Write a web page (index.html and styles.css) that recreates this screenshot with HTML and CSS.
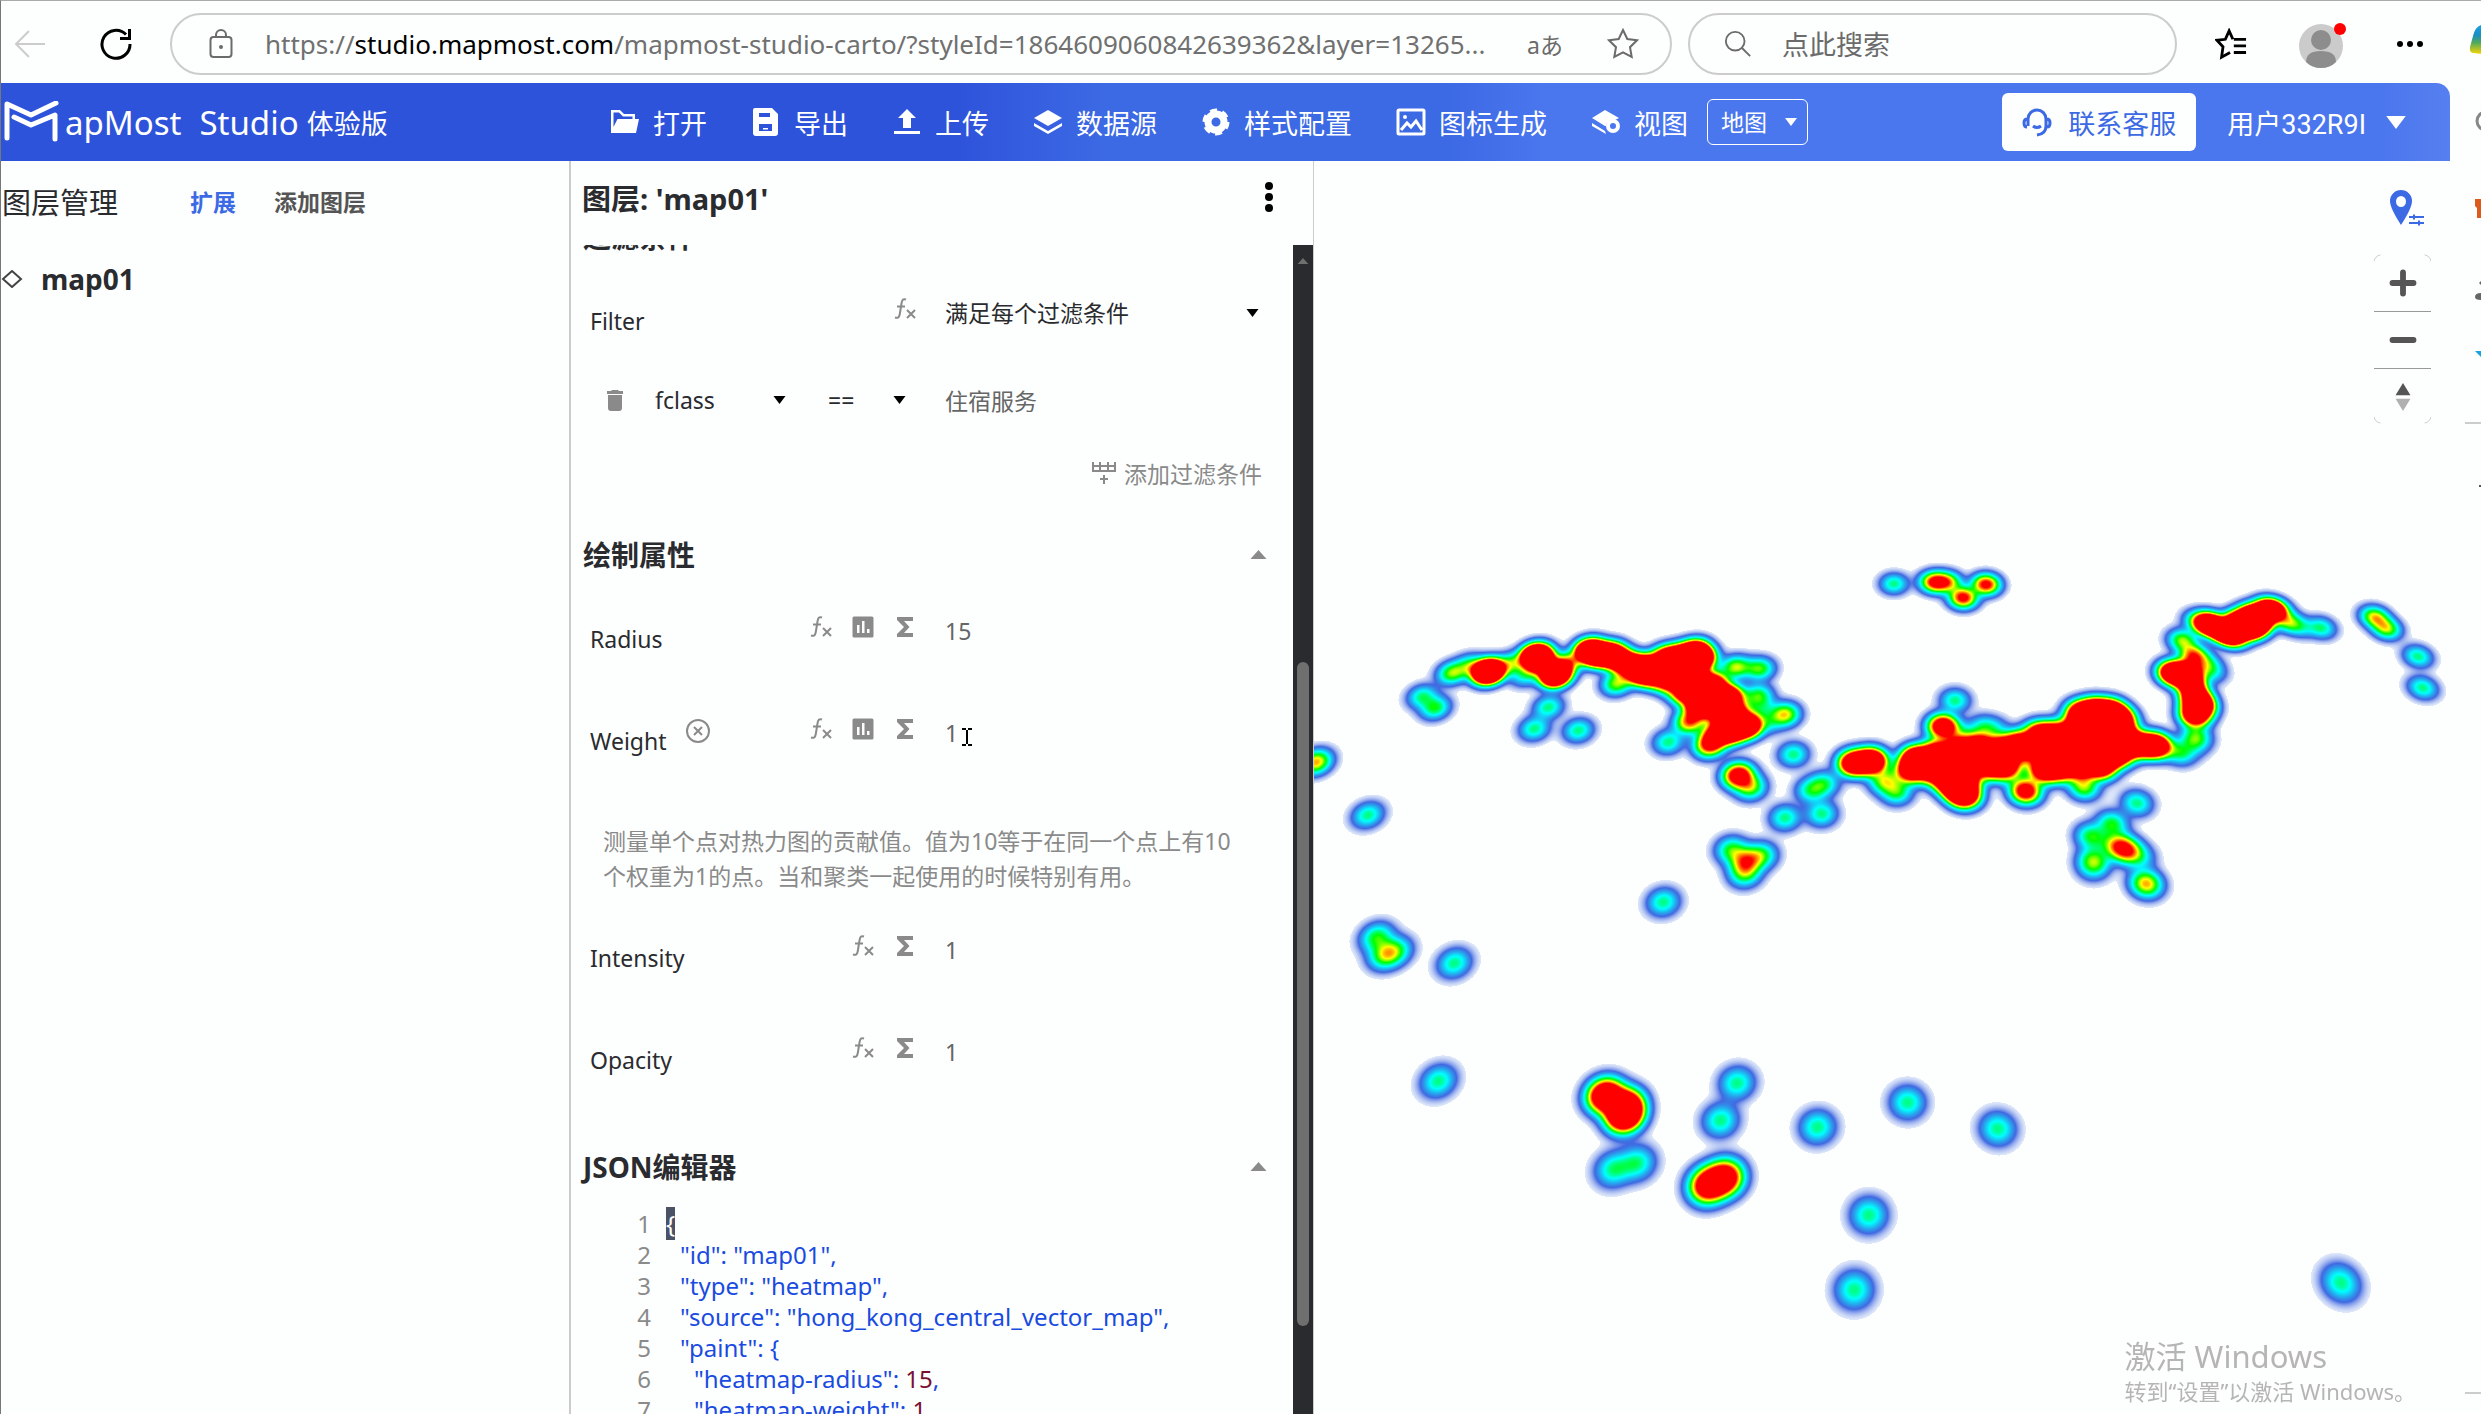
FILE: index.html
```
<!DOCTYPE html>
<html lang="zh-CN">
<head>
    <meta charset="UTF-8" />
    <meta name="viewport" content="width=device-width, initial-scale=1" />
    <title>MapMost Studio</title>
    <link rel="stylesheet" href="styles.css">
</head>
<body>
<!-- Shared icons -->
<svg class="sprite" aria-hidden="true">
    <symbol id="i-fx" viewBox="0 0 24 24"><path d="M13 2.500c-3-1-4 .5-4.500 4L6.800 17c-.6 3.500-2 4.500-4.800 3.500M4 9.500h8" fill="none" stroke="currentColor" stroke-width="2"/><path d="M14 13l8 8M22 13l-8 8" fill="none" stroke="currentColor" stroke-width="2"/></symbol>
    <symbol id="i-chart" viewBox="0 0 24 24"><path fill="currentColor" fill-rule="evenodd" d="M3 1.500h18q1.500 0 1.500 1.500v18q0 1.500-1.500 1.500H3q-1.500 0-1.500-1.500V3q0-1.500 1.500-1.500zM6 10v8h2.500v-8zM11 6v12h2.500V6zM16 14v4h2.500v-4z"/></symbol>
    <symbol id="i-sum" viewBox="0 0 24 24"><path fill="currentColor" d="M4 2h16v4h-9l5.500 6-5.500 6h9v4H4v-3l7-7-7-7z"/></symbol>
    <symbol id="i-caret" viewBox="0 0 12 8"><path fill="currentColor" d="M0 0h12L6 8z"/></symbol>
    <symbol id="i-up" viewBox="0 0 16 9"><path fill="currentColor" d="M0 9h16L8 0z"/></symbol>
</svg>

<div class="browser">
    <button class="bar-btn back" aria-label="后退"><svg viewBox="0 0 32 32"><path d="M31 16H2M15 3L2 16l13 13"/></svg></button>
    <button class="bar-btn reload" aria-label="刷新"><svg viewBox="0 0 32 32"><path d="M26 6.500A14 14 0 1 0 30 16M29.500 1v9.500H20"/></svg></button>
    <div class="address">
        <svg class="lock" viewBox="0 0 24 30"><rect x="1.500" y="8" width="21" height="20" rx="3"/><path d="M7 8V6a5 5 0 0 1 10 0v2"/><circle cx="12" cy="18" r="1"/></svg>
        <div class="url" role="textbox" aria-label="地址">https://<b>studio.mapmost.com</b>/mapmost-studio-carto/?styleId=1864609060842639362&amp;layer=13265...</div>
        <button class="bar-btn translate" aria-label="翻译">aあ</button>
        <button class="bar-btn star" aria-label="收藏"><svg viewBox="0 0 32 32"><path d="M16 2l4.300 9 9.700 1.300-7 6.900 1.700 9.800-8.700-4.700L7.300 29 9 19.200l-7-6.900L11.700 11z"/></svg></button>
    </div>
    <label class="search">
        <svg viewBox="0 0 30 30"><circle cx="12" cy="12" r="10"/><path d="M19 19l9 9"/></svg>
        <input type="text" placeholder="点此搜索">
    </label>
    <button class="bar-btn favs" aria-label="收藏夹"><svg viewBox="0 0 34 32"><path d="M19 11l-4-9-4 9-9 1 6.500 7L7 30l9-5M20 11h13M20 18h13M20 25h13"/></svg></button>
    <button class="bar-btn avatar" aria-label="账户"><svg viewBox="0 0 50 50"><circle cx="22" cy="27" r="22" fill="#cbcbcb"/><circle cx="22" cy="21" r="10" fill="#8d8d8d"/><path d="M7 43q0-11 15-11t15 11q-6 6-15 6T7 43z" fill="#8d8d8d"/><circle cx="41" cy="10" r="6" fill="#f00"/></svg></button>
    <button class="bar-btn more" aria-label="更多"><svg viewBox="0 0 28 8"><circle cx="4" cy="4" r="3"/><circle cx="14" cy="4" r="3"/><circle cx="24" cy="4" r="3"/></svg></button>
</div>

<div class="window">
    <div class="app">
        <header class="topbar">
            <div class="logo">
                <svg viewBox="0 0 56 42"><path d="M4 37V3l24 11L53 2M11 16l17 8 24-10v24"/></svg>
                <span class="logo-name">apMost</span>
                <span class="logo-name">Studio</span>
                <span class="logo-tag">体验版</span>
            </div>
            <nav class="menu">
                <button><svg viewBox="0 0 30 28"><path fill="currentColor" fill-rule="evenodd" d="M1 2h9l4 4h11v5h4l-3 14H1zM3.500 4.500V19l4-8h15V8.500H13l-4-4z"/></svg>打开</button>
                <button><svg viewBox="0 0 30 28"><path fill="currentColor" fill-rule="evenodd" d="M4 0h17l6 6v19q0 3-3 3H5q-3 0-3-3V2q0-2 2-2zM8 5v4h11V5zM8 16v7h13v-7zM12 20h5v1.500h-5z"/></svg>导出</button>
                <button><svg viewBox="0 0 30 28"><path fill="currentColor" d="M15 1l9 9h-5v10h-8V10H6zM2 23h26v3H2z"/></svg>上传</button>
                <button><svg viewBox="0 0 30 28"><path fill="currentColor" d="M15 2l14 8-14 8L1 10zM1 15l14 8 14-8v3l-14 8L1 18z"/></svg>数据源</button>
                <button><svg viewBox="0 0 30 28"><circle cx="15" cy="14" r="8" fill="none" stroke="currentColor" stroke-width="7"/><circle cx="15" cy="14" r="11" fill="none" stroke="currentColor" stroke-width="5" stroke-dasharray="6.500 5"/></svg>样式配置</button>
                <button><svg viewBox="0 0 30 28"><path fill="none" stroke="currentColor" stroke-width="3" d="M3 2h24q1 0 1 1v22q0 1-1 1H3q-1 0-1-1V3q0-1 1-1zM5 22l6-7 4 4 5-6 6 9"/><circle cx="9" cy="9" r="2" fill="currentColor"/></svg>图标生成</button>
                <button><svg viewBox="0 0 30 28"><path fill="currentColor" d="M14 2l14 8-4 2q-8-1-9 6l-1 0L1 10zM1 15l13 8 1 3L1 18z"/><circle cx="22" cy="18" r="5" fill="none" stroke="currentColor" stroke-width="4"/></svg>视图</button>
                <label class="view-select">
                    <select aria-label="视图"><option>地图</option></select>
                    <svg><use href="#i-caret"/></svg>
                </label>
            </nav>
            <div class="account">
                <button class="service"><svg viewBox="0 0 30 30"><path d="M6 19V12a9 9 0 0 1 18 0v7q0 8-9 9M5 12q-3 0-3 4t3 4M25 12q3 0 3 4t-3 4M11 19q4 3 8 0"/></svg>联系客服</button>
                <button class="user">用户332R9I<svg><use href="#i-caret"/></svg></button>
            </div>
        </header>

        <main class="workspace">
            <aside class="layers">
                <div class="layers-head">
                    <h2>图层管理</h2>
                    <button class="expand">扩展</button>
                    <button>添加图层</button>
                </div>
                <div class="layer-item">
                    <svg viewBox="0 0 22 18"><path d="M11 1l9 8-9 8-9-8z"/></svg>
                    map01
                </div>
            </aside>

            <section class="panel">
                <div class="panel-head">
                    <h2>图层: 'map01'</h2>
                    <button aria-label="更多"><svg viewBox="0 0 8 30"><circle cx="4" cy="4" r="4"/><circle cx="4" cy="15" r="4"/><circle cx="4" cy="26" r="4"/></svg></button>
                </div>
                <div class="panel-body">
                    <div class="props">
                        <h3 class="scrolled">过滤条件</h3>
                        <div class="row">
                            <label for="combine">Filter</label>
                            <div class="tools"><button aria-label="函数"><svg><use href="#i-fx"/></svg></button></div>
                            <div class="field pick">
                                <select id="combine"><option>满足每个过滤条件</option></select>
                                <svg><use href="#i-caret"/></svg>
                            </div>
                        </div>
                        <div class="condition">
                            <button aria-label="删除"><svg class="trash" viewBox="0 0 16 22"><path fill="currentColor" d="M5 1h6l1 1h4v3H0V2h4zM1 6h14v13q0 3-3 3H4q-3 0-3-3z"/></svg></button>
                            <div class="pick key"><select aria-label="字段"><option>fclass</option></select><svg><use href="#i-caret"/></svg></div>
                            <div class="pick op"><select aria-label="运算符"><option>==</option></select><svg><use href="#i-caret"/></svg></div>
                            <input type="text" value="住宿服务" aria-label="值">
                        </div>
                        <div class="add">
                            <button><svg viewBox="0 0 24 24"><path d="M1 1v9h22V1M1 5h22M8 1v9M16 1v9M12 14v9M8 18h8"/></svg>添加过滤条件</button>
                        </div>

                        <h3>绘制属性<svg><use href="#i-up"/></svg></h3>
                        <div class="row">
                            <label for="radius">Radius</label>
                            <div class="tools">
                                <button aria-label="函数"><svg><use href="#i-fx"/></svg></button>
                                <button aria-label="图表"><svg><use href="#i-chart"/></svg></button>
                                <button aria-label="求和"><svg><use href="#i-sum"/></svg></button>
                            </div>
                            <input class="field" id="radius" type="text" value="15">
                        </div>
                        <div class="row">
                            <label for="weight">Weight</label>
                            <button class="close" aria-label="关闭"><svg viewBox="0 0 24 24"><circle cx="12" cy="12" r="11"/><path d="M8 8l8 8M16 8l-8 8"/></svg></button>
                            <div class="tools">
                                <button aria-label="函数"><svg><use href="#i-fx"/></svg></button>
                                <button aria-label="图表"><svg><use href="#i-chart"/></svg></button>
                                <button aria-label="求和"><svg><use href="#i-sum"/></svg></button>
                            </div>
                            <input class="field" id="weight" type="text" value="1">
                            <svg class="ibeam" viewBox="0 0 10 18"><path d="M0 1h4M6 1h4M5 2v14M0 17h4M6 17h4"/></svg>
                        </div>
                        <p class="help">测量单个点对热力图的贡献值。值为10等于在同一个点上有10个权重为1的点。当和聚类一起使用的时候特别有用。</p>
                        <div class="row">
                            <label for="intensity">Intensity</label>
                            <div class="tools">
                                <button aria-label="函数"><svg><use href="#i-fx"/></svg></button>
                                <button aria-label="求和"><svg><use href="#i-sum"/></svg></button>
                            </div>
                            <input class="field" id="intensity" type="text" value="1">
                        </div>
                        <div class="row">
                            <label for="opacity">Opacity</label>
                            <div class="tools">
                                <button aria-label="函数"><svg><use href="#i-fx"/></svg></button>
                                <button aria-label="求和"><svg><use href="#i-sum"/></svg></button>
                            </div>
                            <input class="field" id="opacity" type="text" value="1">
                        </div>

                        <h3 class="json-title">JSON编辑器<svg><use href="#i-up"/></svg></h3>
                        <ol class="code">
                            <li><mark>{</mark></li>
                            <li class="in1">"id": "map01",</li>
                            <li class="in1">"type": "heatmap",</li>
                            <li class="in1">"source": "hong_kong_central_vector_map",</li>
                            <li class="in1">"paint": {</li>
                            <li class="in2">"heatmap-radius": <i>15</i>,</li>
                            <li class="in2">"heatmap-weight": <i>1</i></li>
                        </ol>
                    </div>
                    <div class="scrollbar">
                        <svg><use href="#i-up"/></svg>
                        <div class="thumb"></div>
                    </div>
                </div>
            </section>

            <section class="map">
                <canvas id="heat"></canvas>
                <button class="pin" aria-label="定位"><svg viewBox="0 0 34 36"><path fill="currentColor" fill-rule="evenodd" d="M11 0a11 11 0 0 1 11 11q0 7-11 24Q0 18 0 11A11 11 0 0 1 11 0zm0 6a5 5.500 0 0 0 0 11 5 5.500 0 0 0 0-11z"/><path d="M19 27h15M19 33h15M24 24.500v5M29 30.500v5" stroke="currentColor" stroke-width="2"/></svg></button>
                <div class="zoom">
                    <button aria-label="放大"><svg viewBox="0 0 24 24"><path d="M12 3v18M3 12h18"/></svg></button>
                    <button aria-label="缩小"><svg viewBox="0 0 24 24"><path d="M3 12h18"/></svg></button>
                    <button aria-label="指北"><svg viewBox="0 0 16 30"><path class="north" d="M8 0l8 13H0z"/><path class="south" d="M8 30l8-13H0z"/></svg></button>
                    <svg class="corners" viewBox="0 0 57 170"><path d="M0 7Q1 2 6 1M51 1q5 1 6 6M0 163q1 5 6 6M51 169q5-1 6-6"/></svg>
                </div>
                <div class="activate">
                    <strong>激活 Windows</strong>
                    <span>转到“设置”以激活 Windows。</span>
                </div>
            </section>
        </main>
    </div>
    <aside class="edge-bar"></aside>
</div>

<!-- Sidebar apps of the browser, cut by the window edge -->
<svg class="edge-apps" viewBox="0 0 16 1414" aria-hidden="true">
    <defs><linearGradient id="cop" x1="0" y1="0" x2="0" y2="1"><stop offset="0" stop-color="#18a0e8"/><stop offset=".35" stop-color="#1b8fc0"/><stop offset=".6" stop-color="#4fa860"/><stop offset="1" stop-color="#f9d500"/></linearGradient></defs>
    <path d="M16 25q-6 2-8 11l-3 11q-1 6 4 6l7 1z" fill="url(#cop)"/>
    <circle cx="21" cy="121" r="9" fill="none" stroke="#888" stroke-width="3"/>
    <path d="M10 199h6v19h-4v-10l-2-2z" fill="#dc5a1e"/>
    <path d="M16 281l-2 2 2 2zM16 293q-6 0-6 4 0 3 6 3z" fill="#666"/>
    <path d="M10 351h6v6z" fill="#1ba1e2"/>
    <path d="M0 423h16M0 1393h16" stroke="#ccc" stroke-width="2"/>
    <path d="M14 486h2" stroke="#555" stroke-width="2"/>
</svg>
<script src="heatmap.js"></script>
</body>
</html>
```
FILE: styles.css
```
* {
  box-sizing: border-box;
}
body {
  margin: 0;
  height: 100vh;
  display: flex;
  flex-direction: column;
  overflow: hidden;
  position: relative;
  border-top: 1px solid #aaa;
  border-left: 1px solid #777;
  background: #fdfffe;
  color: #2a2b2f;
  font-family: "Noto Sans", "Noto Sans CJK SC", sans-serif;
  font-size: 23px;
}
button, input, select {
  margin: 0;
  padding: 0;
  border: none;
  outline: none;
  background: none;
  color: inherit;
  font: inherit;
}
select {
  appearance: none;
}
h2, h3, p, ol {
  margin: 0;
  padding: 0;
}
svg {
  display: block;
  flex: none;
}
.sprite {
  position: absolute;
  width: 0;
  height: 0;
}

/* browser bar */
.browser {
  flex: none;
  height: 82px;
  display: flex;
  align-items: center;
  padding: 4px 57px 0 13px;
  font-size: 26px;
}
.browser svg {
  fill: none;
  stroke: #6b6b6b;
  stroke-width: 2;
}
.bar-btn svg {
  width: 32px;
  height: 32px;
}
.browser .back svg {
  stroke: #ccc;
}
.browser .reload {
  margin: 0 38px 0 54px;
}
.browser .reload svg, .browser .favs svg {
  stroke: #000;
  stroke-width: 3;
}
.address, .search {
  height: 62px;
  display: flex;
  align-items: center;
  border: 2px solid #ccc;
  border-radius: 31px;
}
.address {
  flex: 1;
  padding: 0 31px 0 37px;
}
.address .lock {
  width: 24px;
  height: 30px;
  margin-right: 32px;
}
.url {
  flex: 1;
  color: #707070;
  white-space: nowrap;
  overflow: hidden;
  font-size: 26px;
}
.url b {
  color: #000;
  font-weight: 400;
}
.translate {
  color: #6b6b6b;
  font-size: 23px;
  margin: 0 44px 0 38px;
}
.search {
  width: 489px;
  margin-left: 16px;
  padding-left: 34px;
  gap: 30px;
}
.search svg {
  width: 28px;
  height: 28px;
}
.search input {
  min-width: 0;
  flex: 1;
  font-size: 27px;
}
.search input::placeholder {
  color: #6b6b6b;
  opacity: 1;
}
.favs {
  margin-left: 38px;
}
.avatar {
  margin-left: 52px;
}
.avatar svg {
  width: 50px;
  height: 50px;
  stroke: none;
}
.more {
  margin-left: 47px;
}
.more svg {
  width: 28px;
  height: 8px;
  fill: #000;
  stroke: none;
}

/* app shell */
.window {
  flex: 1;
  min-height: 0;
  display: flex;
}
.app {
  flex: 1;
  min-width: 0;
  display: flex;
  flex-direction: column;
}
.edge-bar {
  width: 31px;
}
.edge-apps {
  position: absolute;
  top: -1px;
  right: 0;
  width: 16px;
  height: 1414px;
}
.topbar {
  flex: none;
  height: 78px;
  display: flex;
  align-items: center;
  padding: 0 44px 0 2px;
  border-top-right-radius: 14px;
  background: linear-gradient(90deg, #2e53db 39%, #3c69e4 45%, #3c69e4 59%, #4a76ee 63%, #4a76ee 97%, #5680f0);
  color: #fff;
  font-size: 27px;
}
.topbar button {
  display: flex;
  align-items: center;
}
.logo {
  width: 607px;
  display: flex;
  align-items: center;
}
.logo svg {
  width: 56px;
  height: 42px;
  margin-right: 6px;
  fill: none;
  stroke: #fff;
  stroke-width: 5;
  stroke-linecap: round;
  stroke-linejoin: round;
}
.logo-name {
  margin-right: 18px;
  font-size: 33px;
}
.logo-tag {
  margin-left: -10px;
}
.menu {
  display: flex;
  align-items: center;
  gap: 44px;
}
.menu button {
  gap: 13px;
}
.menu button svg {
  width: 30px;
  height: 28px;
}
.view-select {
  display: flex;
  align-items: center;
  height: 46px;
  width: 101px;
  margin-left: -25px;
  padding: 0 10px 0 13px;
  border: 1px solid #fff;
  border-radius: 6px;
  font-size: 23px;
}
.view-select select {
  flex: 1;
  min-width: 0;
}
.view-select option {
  color: #2a2b2f;
}
.view-select svg {
  width: 12px;
  height: 8px;
}
.account {
  display: flex;
  align-items: center;
  margin-left: auto;
  gap: 31px;
}
.service {
  height: 58px;
  padding: 0 20px;
  gap: 16px;
  border-radius: 6px;
  color: #3c69e4;
}
.topbar .service {
  background: #fdfffe;
}
.service svg {
  width: 30px;
  height: 30px;
  fill: none;
  stroke: currentColor;
  stroke-width: 3;
}
.user {
  gap: 20px;
  font-family: Roboto, "Noto Sans CJK SC", sans-serif;
}
.user svg {
  width: 20px;
  height: 13px;
}
.workspace {
  flex: 1;
  min-height: 0;
  display: grid;
  grid-template-columns: 568px 745px 1fr;
}

/* layer list */
.layers-head {
  display: flex;
  align-items: center;
  height: 80px;
  padding-left: 1px;
  font-weight: 700;
}
.layers h2 {
  margin-right: 72px;
  font-size: 29px;
  font-weight: 400;
}
.layers button {
  color: #555;
}
.layers .expand {
  margin-right: 38px;
  color: #3c69e4;
}
.layer-item {
  display: flex;
  align-items: center;
  gap: 18px;
  height: 76px;
  font-size: 28px;
  font-weight: 700;
}
.layer-item svg {
  width: 22px;
  height: 18px;
  fill: none;
  stroke: #444;
  stroke-width: 2;
}

/* property panel */
.panel {
  min-height: 0;
  display: flex;
  flex-direction: column;
  border-left: 2px solid #ccc;
  border-right: 1px solid #ccc;
}
.panel-head {
  flex: none;
  display: flex;
  align-items: center;
  justify-content: space-between;
  height: 84px;
  padding: 0 40px 13px 11px;
}
.panel-head h2 {
  font-size: 29px;
}
.panel-head svg {
  width: 8px;
  height: 30px;
}
.panel-body {
  flex: 1;
  min-height: 0;
  display: flex;
}
.props {
  flex: 1;
  min-width: 0;
  overflow: hidden;
}
.props button, .help, .add {
  color: #8a8a8a;
}
.props h3 {
  display: flex;
  align-items: center;
  justify-content: space-between;
  height: 70px;
  padding: 0 26px 0 12px;
  font-size: 28px;
}
.props h3 svg {
  width: 17px;
  height: 9px;
  color: #8a8a8a;
}
.props .scrolled {
  margin-top: -44px;
}
.props .json-title {
  margin-top: 19px;
}
.row {
  position: relative;
  display: flex;
  height: 102px;
  padding-left: 19px;
}
.row label {
  padding-top: 33px;
  line-height: 34px;
}
.tools {
  display: flex;
  align-items: flex-start;
  justify-content: flex-end;
  gap: 18px;
  margin-left: auto;
  padding-top: 26px;
}
.tools svg {
  width: 24px;
  height: 24px;
}
.close {
  display: flex;
  align-items: flex-start;
  margin-left: 19px;
  padding-top: 28px;
}
.close svg {
  width: 24px;
  height: 24px;
  fill: none;
  stroke: currentColor;
  stroke-width: 2;
}
.field {
  flex: none;
  width: 348px;
  height: 34px;
  margin: 25px 0 0 28px;
}
.row input, .condition input {
  color: #666;
}
.ibeam {
  position: absolute;
  left: 391px;
  top: 37px;
  width: 10px;
  height: 18px;
  stroke: #000;
  stroke-width: 2;
}
.pick {
  display: flex;
  align-items: center;
}
.pick select {
  flex: 1;
  min-width: 0;
}
.pick svg {
  width: 13px;
  height: 8px;
  color: #000;
}
.row .pick {
  width: 314px;
  margin-right: 34px;
}
.condition {
  display: flex;
  align-items: center;
  height: 54px;
  padding-left: 36px;
}
.trash {
  width: 16px;
  height: 22px;
}
.key {
  width: 131px;
  margin-left: 32px;
}
.op {
  width: 78px;
  margin: 0 39px 0 42px;
}
.condition input {
  width: 300px;
}
.add {
  display: flex;
  justify-content: flex-end;
  height: 92px;
  padding-right: 31px;
}
.add button {
  display: flex;
  align-items: center;
  gap: 8px;
}
.add svg {
  width: 24px;
  height: 24px;
  fill: none;
  stroke: currentColor;
  stroke-width: 2;
}
.help {
  margin: 31px 56px 14px 32px;
  line-height: 35px;
}
.code {
  padding: 7px 0 0 95px;
  list-style: none;
  counter-reset: line;
  color: #1a4be0;
  font-size: 24px;
  line-height: 31px;
  white-space: nowrap;
}
.code li {
  counter-increment: line;
}
.code li::before {
  content: counter(line);
  display: inline-block;
  width: 0;
  margin-left: -15px;
  margin-right: 15px;
  direction: rtl;
  color: #8a8a8a;
}
.code li.in1::before {
  margin-right: 29px;
}
.code li.in2::before {
  margin-right: 43px;
}
.code mark {
  background: #4c5266;
  color: #fff;
}
.code i {
  color: #7a1030;
  font-style: normal;
}
.scrollbar {
  width: 20px;
  padding-top: 13px;
  background: #2a2b2f;
}
.scrollbar svg {
  width: 12px;
  height: 6px;
  margin: 0 auto;
  color: #6f6f6f;
}
.thumb {
  width: 12px;
  height: 664px;
  margin: 398px auto 0;
  border-radius: 6px;
  background: #6f6f6f;
}

/* map */
.map {
  position: relative;
  min-width: 0;
  overflow: hidden;
}
.map canvas {
  display: block;
  width: 100%;
  height: 100%;
}
.pin {
  position: absolute;
  top: 29px;
  right: 26px;
  color: #3c69e4;
}
.pin svg {
  width: 34px;
  height: 36px;
}
.zoom {
  position: absolute;
  top: 93px;
  right: 19px;
  width: 57px;
}
.zoom button {
  display: flex;
  align-items: center;
  justify-content: center;
  width: 100%;
  height: 57px;
}
.zoom button + button {
  border-top: 1px solid #999;
}
.zoom svg {
  width: 28px;
  height: 28px;
  stroke: #555;
  stroke-width: 5;
  stroke-linecap: round;
}
.zoom .corners {
  position: absolute;
  top: 0;
  left: 0;
  width: 57px;
  height: 170px;
  fill: none;
  stroke: #ccc;
  stroke-width: 1;
  pointer-events: none;
}
.zoom .north, .zoom .south {
  stroke: none;
  fill: #555;
}
.zoom .south {
  fill: #b0b0b0;
}
.activate {
  position: absolute;
  right: 34px;
  bottom: 7px;
  color: #b5b5b5;
}
.activate strong, .activate span {
  display: block;
  font-size: 22px;
  font-weight: 400;
  line-height: 32px;
}
.activate strong {
  font-size: 31px;
  line-height: 38px;
}
```
FILE: heatmap.js
```
// Points per tile: x, y on the tile grid and weight
const tiles = [
  { left: -4, top: 379, sx: 600 / 1568, sy: 1 / 3, points: [
    [150,824,1],[922,1085,1],[376,1268,1],[585,565,1],[622,500,1],[700,570,1],[1262,642,1],
    [1240,832,1],[1336,820,1],[1240,522,1.8],[15,665,2],[935,605,1],
    [292,468,1],[326,502,1.2],[370,398,1.5],[415,375,1.1],[465,393,10],
    [525,370,1.2],[560,405,0.8],[590,345,8],[600,365,4],[640,403,8],[668,370,2],
    [730,330,7],[755,345,5],[785,340,5],[810,360,4],[840,375,4],[865,400,4],[900,380,3],
    [870,375,3],[900,410,3],
    [930,350,4],[965,345,4],[1005,333,6],[1020,355,5],[1000,385,3],[950,395,3],[940,425,3],
    [1010,420,3],[1050,430,4],[980,455,4],[1020,465,3],[1065,465,4],[1095,470,4],[1015,500,4],
    [1060,510,3],[1105,515,4],[1090,550,4],[1140,555,6],[1100,575,4],[1060,585,3],[1042,615,2.5],
    [990,545,2.2],[800,430,1.5],[1110,380,1.5],[1175,385,1.3],[1140,380,0.3],[1170,465,1.2],
    [1180,500,0.6],[1200,545,0.6],[1118,705,3.6],[1150,740,1.5],[1308,750,1],[1342,730,1],
    [1420,668,5],[1465,662,6],[1500,722,1.5],[1100,928,1.2],[1178,945,1.2],[1135,1000,1.2],
    [1137,962,1.9],[173,1190,1.2],[196,1243,1.4],[224,1232,0.9]
  ] },
  { left: 536, top: 379, sx: 631 / 1568, sy: 1 / 3, points: [
    [108,130,1],[212,125,2.5],[243,125,1.6],[195,125,0.4],[280,172,2.8],[337,132,2.8],
    [260,480,1],[230,558,4.2],[278,578,0.5],[330,560,0.8],[360,565,0.5],
    [575,518,5],[610,508,5],[648,512,5],[672,535,4],[560,555,3],[600,555,2],[640,555,2],
    [680,575,3],[470,580,4],[510,580,4],[550,590,2],[600,595,2],[645,600,2],[690,610,4],
    [725,615,4],[760,615,5],[420,608,4],[375,622,4],[320,615,4],[270,622,4],[215,635,4],
    [165,655,6],[150,690,4],[200,690,4],[245,680,2],[290,670,2],[340,665,2],[390,660,2],
    [440,640,2],[490,640,2],[540,645,2],[590,650,2],[640,650,4],[670,640,3],[620,680,4],
    [500,615,3],[550,620,3],[600,625,3],[650,625,2],
    [570,680,4],[520,685,4],[480,690,4],[385,685,3],[345,680,3],[240,720,4],[270,745,6],
    [285,765,4],[290,710,3],[435,752,3.4],[580,740,1.5],[115,755,1.2],
    [820,638,1],[860,590,1.2],[850,615,0.5],
    [803,398,6],[840,395,4],[845,430,4],[858,470,4],[868,495,5],[855,525,4],
    [853,345,2.2],[825,300,1.5],[885,370,0.9],[900,395,0.6],
    [890,250,6],[925,270,5],[950,285,5],[965,245,5],[1000,255,5],[1000,225,5],[1040,208,6],
    [985,265,4],[1015,240,4],[860,240,0.8],
    [1060,210,1.5],[1090,245,1.3],[1120,260,0.6],[1170,262,1],
    [1303,230,1.8],[1332,264,1.6],[1410,348,1],[1422,442,1],[712,788,1],
    [598,888,1.2],[650,850,1.2],[605,960,1.3],[600,985,0.5],[640,910,0.2],[668,918,1.9],[690,932,1.6],
    [720,950,0.6],[735,1030,2]
  ] },
  { left: -4, top: 819, sx: 760 / 1568, sy: 1 / 3, points: [
    [264,302,1],[880,308,1],[846,420,1],[1046,440,1],[1232,366,1],[1418,445,1],[1152,704,1],
    [1122,928,1],[2126,907,1],[625,567,1],[674,548,1],[608,345,5],[650,375,4],[648,405,5],
    [820,615,4],[855,592,4]
  ] }
];

// density -> r, g, b, a
const ramp = [
  [0, 0, 0, 255, 0],
  [0.1, 65, 105, 225, 1],
  [0.3, 0, 255, 255, 1],
  [0.5, 0, 255, 0, 1],
  [0.7, 255, 255, 0, 1],
  [1, 255, 0, 0, 1]
];

function colorAt(v) {
  if (v >= 1) return [255, 0, 0, 1];
  let i = 1;
  while (v > ramp[i][0]) i++;
  const a = ramp[i - 1], b = ramp[i];
  const t = (v - a[0]) / (b[0] - a[0]);
  // premultiplied mix, so the fade to transparent keeps its hue
  const alpha = a[4] + (b[4] - a[4]) * t;
  const mix = k => alpha ? (a[k] * a[4] * (1 - t) + b[k] * b[4] * t) / alpha : 0;
  return [mix(1), mix(2), mix(3), alpha];
}

function drawHeat() {
  const canvas = document.getElementById("heat");
  const w = canvas.width = canvas.clientWidth;
  const h = canvas.height = canvas.clientHeight;
  const ctx = canvas.getContext("2d");
  const density = new Float32Array(w * h);

  // the map is pitched: kernels shrink and lean toward the vanishing point
  const vanishX = 580, vanishY = -1628;

  tiles.forEach(tile => {
    tile.points.forEach(([px, py, weight]) => {
      const x = tile.left + px * tile.sx;
      const y = tile.top + py * tile.sy;
      const s = (y - vanishY) / 2367;
      const rx = 30 * s;
      const ry = 26 * s * s;
      const lean = (x - vanishX) / (y - vanishY);

      for (let j = Math.max(0, Math.floor(y - ry * 1.5)); j < Math.min(h, y + ry * 1.5); j++) {
        for (let i = Math.max(0, Math.floor(x - rx * 1.8)); i < Math.min(w, x + rx * 1.8); i++) {
          const dy = (j - y) / ry;
          const dx = (i - x - (j - y) * lean) / rx;
          density[j * w + i] += weight * 0.3989 * Math.exp(-4.5 * (dx * dx + dy * dy));
        }
      }
    });
  });

  const image = ctx.createImageData(w, h);
  for (let k = 0; k < density.length; k++) {
    if (density[k] < 0.015) continue;
    const c = colorAt(density[k]);
    image.data[k * 4] = c[0];
    image.data[k * 4 + 1] = c[1];
    image.data[k * 4 + 2] = c[2];
    image.data[k * 4 + 3] = c[3] * 255;
  }
  ctx.putImageData(image, 0, 0);
}

drawHeat();
window.addEventListener("resize", drawHeat);
```
